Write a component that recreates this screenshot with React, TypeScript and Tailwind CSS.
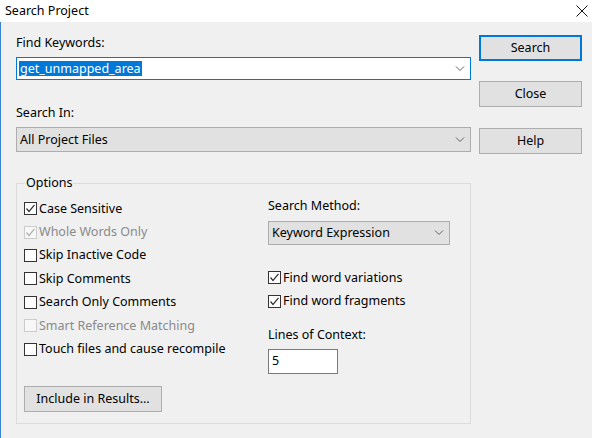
import type { ReactNode } from 'react'

const font = { fontFamily: '"Noto Sans", "Noto Sans CJK SC", sans-serif' }

function Chevron() {
  return (
    <svg width="10" height="6" viewBox="0 0 10 6" className="shrink-0">
      <path d="M1 0.5 L5 4.5 L9 0.5" fill="none" stroke="#606060" strokeWidth="1" />
    </svg>
  )
}

function Check({ checked, disabled }: { checked?: boolean; disabled?: boolean }) {
  return (
    <span
      className={`w-[13px] h-[13px] shrink-0 border flex items-center justify-center ${
        disabled ? 'border-[#cccccc] bg-[#f7f7f7]' : 'border-[#333333] bg-white'
      }`}
    >
      {checked && (
        <svg width="11" height="11" viewBox="0 0 11 11">
          <path
            d="M1.5 5.5 L4 8.5 L9.5 1.8"
            fill="none"
            stroke={disabled ? '#b0b0b0' : '#333333'}
            strokeWidth="1.2"
          />
        </svg>
      )}
    </span>
  )
}

function Row({ label, checked, disabled }: { label: string; checked?: boolean; disabled?: boolean }) {
  return (
    <div className="h-[23.4px] flex items-center gap-[2px]">
      <Check checked={checked} disabled={disabled} />
      <span className={disabled ? 'text-[#8a8a8a]' : 'text-black'}>{label}</span>
    </div>
  )
}

function Btn({ children, primary, className = '' }: { children: ReactNode; primary?: boolean; className?: string }) {
  return (
    <div
      className={`flex items-center justify-center bg-[#e1e1e1] text-black ${
        primary ? 'border-2 border-[#0078d7]' : 'border border-[#adadad]'
      } ${className}`}
    >
      {children}
    </div>
  )
}

export default function App() {
  return (
    <div className="w-[592px] h-[438px] overflow-hidden text-[12.5px] leading-[16px]" style={font}>
      {/* Title bar */}
      <div className="h-[22px] bg-white flex items-center justify-between pl-[5px] pr-[4px] text-[12.5px]">
        <span>Search Project</span>
        <svg width="12" height="12" viewBox="0 0 12 12">
          <path d="M0.5 0.5 L11.5 11.5 M11.5 0.5 L0.5 11.5" stroke="#111" strokeWidth="1" />
        </svg>
      </div>

      {/* Body */}
      <div className="h-[416px] bg-[#f0f0f0] border-l border-[#3a82cf] flex">
        <div className="ml-[15px] w-[455px] flex flex-col">
          <div className="mt-[13px]">Find Keywords:</div>
          <div className="mt-[6px] h-[23px] bg-white border border-[#0078d7] flex items-center pl-[2px] pr-[5px]">
            <span className="bg-[#0078d7] text-white px-[1px] leading-[15px]">get_unmapped_area</span>
            <span className="flex-1" />
            <Chevron />
          </div>

          <div className="mt-[25px]">Search In:</div>
          <div className="mt-[6px] h-[25px] bg-[#e1e1e1] border border-[#adadad] flex items-center pl-[3px] pr-[5px]">
            <span className="flex-1">All Project Files</span>
            <Chevron />
          </div>

          {/* Options group */}
          <div className="relative mt-[31px] w-[455px] h-[241px] border border-[#dcdcdc] flex">
            <span className="absolute -top-[9px] left-[8px] px-[1px] bg-[#f0f0f0]">Options</span>
            <div className="ml-[7px] mt-[13px] w-[244px] flex flex-col">
              <Row label="Case Sensitive" checked />
              <Row label="Whole Words Only" checked disabled />
              <Row label="Skip Inactive Code" />
              <Row label="Skip Comments" />
              <Row label="Search Only Comments" />
              <Row label="Smart Reference Matching" disabled />
              <Row label="Touch files and cause recompile" />
              <Btn className="mt-[25px] w-[138px] h-[26px]">Include in Results...</Btn>
            </div>
            <div className="mt-[14px] flex flex-col w-[182px]">
              <div>Search Method:</div>
              <div className="mt-[7px] h-[24px] bg-[#e1e1e1] border border-[#adadad] flex items-center pl-[3px] pr-[5px]">
                <span className="flex-1">Keyword Expression</span>
                <Chevron />
              </div>
              <div className="mt-[21px]">
                <Row label="Find word variations" checked />
                <Row label="Find word fragments" checked />
              </div>
              <div className="mt-[14px]">Lines of Context:</div>
              <div className="mt-[6px] w-[70px] h-[25px] bg-white border border-[#7a7a7a] flex items-center pl-[3px]">5</div>
            </div>
          </div>
        </div>

        {/* Right buttons */}
        <div className="ml-[8px] w-[103px] flex flex-col">
          <Btn primary className="mt-[13px] h-[26px]">Search</Btn>
          <Btn className="mt-[20px] h-[26px]">Close</Btn>
          <Btn className="mt-[21px] h-[26px]">Help</Btn>
        </div>
      </div>
    </div>
  )
}
